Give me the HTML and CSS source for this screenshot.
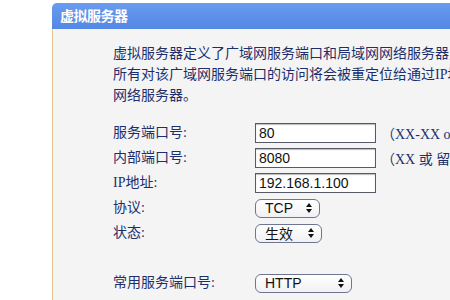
FILE: index.html
```html
<!DOCTYPE html>
<html lang="zh-CN">
<head>
  <meta charset="UTF-8" />
  <title>虚拟服务器</title>
  <link rel="stylesheet" href="styles.css">
</head>
<body>

  <div class="frame">
    <div class="title-bar">虚拟服务器</div>
    <div class="panel">
      <p class="intro">虚拟服务器定义了广域网服务端口和局域网网络服务器之间的映射关系，<br>所有对该广域网服务端口的访问将会被重定位给通过IP地址指定的局域网<br>网络服务器。</p>

      <div class="form">
        <label>服务端口号:</label>
        <input type="text" class="field" value="80" />
        <span class="hint">（XX-XX or XX）</span>

        <label>内部端口号:</label>
        <input type="text" class="field" value="8080" />
        <span class="hint">（XX 或 留空）</span>

        <label>IP地址:</label>
        <input type="text" class="field" value="192.168.1.100" />
        <span></span>

        <label>协议:</label>
        <div class="select sel-tcp">TCP
          <svg class="arrows" width="6" height="10" viewBox="0 0 6 10"><path d="M3 0 L6 4 L0 4 Z M0 6 L6 6 L3 10 Z" fill="#111"/></svg>
        </div>
        <span></span>

        <label>状态:</label>
        <div class="select sel-state">生效
          <svg class="arrows" width="6" height="10" viewBox="0 0 6 10"><path d="M3 0 L6 4 L0 4 Z M0 6 L6 6 L3 10 Z" fill="#111"/></svg>
        </div>
        <span></span>

        <div class="spacer"></div>

        <label>常用服务端口号:</label>
        <div class="select sel-common">HTTP
          <svg class="arrows" width="6" height="10" viewBox="0 0 6 10"><path d="M3 0 L6 4 L0 4 Z M0 6 L6 6 L3 10 Z" fill="#111"/></svg>
        </div>
        <span></span>
      </div>
    </div>
  </div>

</body>
</html>
```

FILE: styles.css
```css
html, body {
  height: 300px;
  overflow: hidden;
}

body {
  margin: 0;
  background: #fff;
  font-family: "Liberation Serif", "Noto Sans CJK SC", serif;
}

.frame {
  margin: 3px 0 0 52px;
  height: 297px;
  overflow: hidden;
}

.title-bar {
  height: 26px;
  line-height: 25px;
  padding-left: 8px;
  background: linear-gradient(#6a9bf0, #5287e4);
  border-top-left-radius: 5px;
  color: #fff;
  font-family: "Noto Sans CJK SC", sans-serif;
  font-weight: bold;
  font-size: 14px;
  letter-spacing: -0.5px;
}

.panel {
  box-sizing: border-box;
  height: 271px;
  background: #f4f4f5;
  border-left: 1px solid #e8c58e;
  padding: 14px 0 0 60px;
  overflow: hidden;
}

.intro {
  margin: 0;
  font-size: 14px;
  line-height: 21px;
  color: #1d2f6b;
  white-space: nowrap;
}

.form {
  display: grid;
  grid-template-columns: 142px 121px 200px;
  grid-auto-rows: 20px;
  row-gap: 5px;
  align-items: center;
  margin-top: 17px;
  color: #1d2f6b;
  font-size: 14px;
}

.form label {
  line-height: 20px;
}

.field {
  box-sizing: border-box;
  width: 121px;
  height: 20px;
  margin: 0;
  padding: 0 3px;
  border: 1px solid #555a66;
  box-shadow: inset 0 1px 1px #bbb;
  background: #fff;
  font-family: "Liberation Sans", Arial, sans-serif;
  font-size: 14px;
  color: #111;
}

.hint {
  padding-left: 5px;
  white-space: nowrap;
}

.select {
  box-sizing: border-box;
  height: 19px;
  display: flex;
  align-items: center;
  justify-content: space-between;
  padding: 0 7px 0 9px;
  border: 1px solid #6f7590;
  border-radius: 6px;
  background: linear-gradient(#ffffff, #f1f1f3);
  font-family: "Liberation Sans", "Noto Sans CJK SC", sans-serif;
  font-size: 14px;
  color: #111;
}

.sel-tcp {
  width: 65px;
}

.sel-state {
  width: 67px;
}

.sel-common {
  width: 97px;
}

.spacer {
  grid-column: 1 / 4;
}
```
